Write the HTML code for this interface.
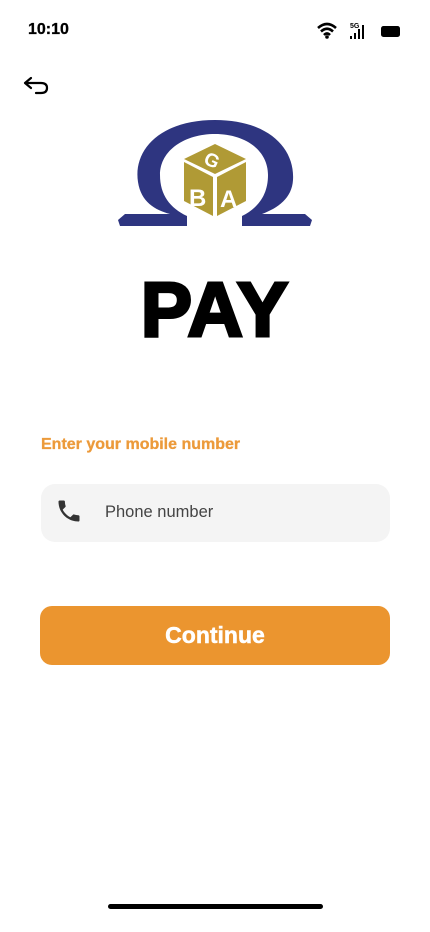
<!DOCTYPE html>
<html><head><meta charset="utf-8"><style>
body{margin:0;width:430px;height:932px;background:#fff;font-family:"Liberation Sans",sans-serif;position:relative;overflow:hidden}
.a{position:absolute}
</style></head><body>
<div class="a" style="left:28px;top:21px;font-size:16px;font-weight:bold;color:#000;-webkit-text-stroke:0.3px #000">10:10</div>
<svg class="a" style="left:316px;top:20px" width="90" height="22" viewBox="0 0 90 22">
<path d="M2 8 Q11 0 20 8" stroke="#000" stroke-width="2.6" fill="none"/>
<path d="M5 11.5 Q11 6 17 11.5" stroke="#000" stroke-width="2.6" fill="none"/>
<path d="M8 15 Q11 12 14 15" stroke="#000" stroke-width="2.6" fill="none"/>
<circle cx="11" cy="17" r="1.8" fill="#000"/>
<text x="34" y="8" font-size="7" font-weight="bold" font-family="Liberation Sans">5G</text>
<rect x="34" y="16" width="2" height="3" fill="#000"/><rect x="38" y="13" width="2" height="6" fill="#000"/><rect x="42" y="9" width="2" height="10" fill="#000"/><rect x="46" y="5" width="2" height="14" fill="#000"/>
<rect x="65" y="6" width="19" height="11" rx="2.5" fill="#000"/>
</svg>
<svg class="a" style="left:22px;top:74px" width="30" height="24" viewBox="0 0 30 24">
<path d="M9 4 L3 9 L9 14 M3 9 H19 Q25 9 25 14 Q25 19 19 19 H14" stroke="#000" stroke-width="2.2" fill="none" stroke-linecap="round" stroke-linejoin="round"/>
</svg>
<svg class="a" style="left:110px;top:110px" width="210" height="130" viewBox="110 110 210 130">
<path fill-rule="evenodd" fill="#2e3580" d="M215 120 C160 120 133 150 138 182 C141 202 155 210 170 214 L125 214 L118 220 L120 226 L187 226 L187 216 C170 208 160 195 160 175 C160 150 185 134 215 134 C245 134 268 150 268 175 C268 195 258 208 242 216 L242 226 L310 226 L312 220 L305 214 L262 214 C278 208 292 198 293 180 C295 148 268 120 215 120 Z"/>
<g fill="#b09a35">
<path d="M215 144 L246 159 L215 174 L184 159 Z"/>
<path d="M184 162 L213 177 L213 216 L184 201 Z"/>
<path d="M217 177 L246 162 L246 201 L217 216 Z"/>
</g>
<g fill="#fff" font-family="Liberation Sans" font-weight="bold">
<text x="205" y="168" font-size="19" transform="rotate(25 215 160)">G</text>
<text x="189" y="206" font-size="24">B</text>
<text x="220" y="207" font-size="24">A</text>
</g>
</svg>
<div class="a" style="left:0;width:430px;top:266px;text-align:center;font-size:77px;font-weight:900;color:#000;line-height:88px;letter-spacing:1px;-webkit-text-stroke:3px #000">PAY</div>
<div class="a" style="left:41px;top:436px;font-size:16px;font-weight:bold;color:#ec9a3a;-webkit-text-stroke:0.3px #ec9a3a">Enter your mobile number</div>
<div class="a" style="left:41px;top:484px;width:349px;height:58px;background:#f4f4f4;border-radius:14px"></div>
<svg class="a" style="left:55px;top:497px" width="28" height="28" viewBox="0 0 24 24"><path fill="#333" d="M6.6 10.8c1.4 2.8 3.8 5.1 6.6 6.6l2.2-2.2c.3-.3.7-.4 1-.2 1.1.4 2.3.6 3.6.6.6 0 1 .4 1 1V20c0 .6-.4 1-1 1C10.6 21 3 13.4 3 4c0-.6.4-1 1-1h3.5c.6 0 1 .4 1 1 0 1.3.2 2.5.6 3.6.1.3 0 .7-.2 1z"/></svg>
<div class="a" style="left:105px;top:503px;font-size:16.5px;color:#444">Phone number</div>
<div class="a" style="left:40px;top:606px;width:350px;height:59px;background:#eb952f;border-radius:12px;color:#fff;font-size:23px;font-weight:bold;text-align:center;line-height:59px;-webkit-text-stroke:0.5px #fff">Continue</div>
<div class="a" style="left:108px;top:904px;width:215px;height:5px;background:#000;border-radius:3px"></div>
</body></html>
